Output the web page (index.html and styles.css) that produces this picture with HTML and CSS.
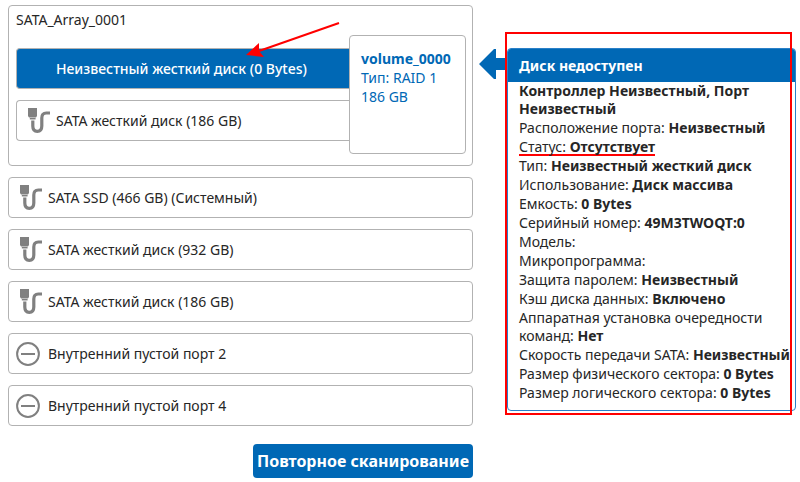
FILE: index.html
```
<!DOCTYPE html>
<html lang="ru">
<head>
<meta charset="utf-8">
<meta name="viewport" content="width=device-width, initial-scale=1">
<title>SATA_Array_0001</title>
<link rel="stylesheet" href="styles.css">
</head>
<body>

<svg class="defs" aria-hidden="true">
	<symbol id="cable" viewBox="0 0 24 26">
		<path d="M0 0h9v8l-1 1.500H1L0 8z" fill="#808080"/>
		<path d="M1.800 10.700h5.800" stroke="#808080" stroke-width="1.500"/>
		<path d="M4.800 12.500v5.500c0 3.400 1.600 5.300 4.500 5.300s4.500-1.900 4.500-5.300V10c0-3.500 1.500-5 4.500-5H22" fill="none" stroke="#808080" stroke-width="3.200"/>
	</symbol>
	<symbol id="empty" viewBox="0 0 24 24">
		<circle cx="12" cy="12" r="10.900" fill="none" stroke="#808080" stroke-width="2"/>
		<path d="M5 12h14" stroke="#808080" stroke-width="2"/>
	</symbol>
</svg>

<main class="page">
	<section class="devices">
		<div class="array">
			<h1 class="array-name">SATA_Array_0001</h1>
			<div class="array-body">
				<div class="members">
					<button type="button" class="disk selected"><span class="icon"></span>Неизвестный жесткий диск (0 Bytes)</button>
					<button type="button" class="disk"><svg class="icon"><use href="#cable"/></svg>SATA жесткий диск (186 GB)</button>
				</div>
				<button type="button" class="volume">
					<b>volume_0000</b>
					<span>Тип: RAID 1</span>
					<span>186 GB</span>
				</button>
			</div>
		</div>
		<button type="button" class="disk"><svg class="icon"><use href="#cable"/></svg>SATA SSD (466 GB) (Системный)</button>
		<button type="button" class="disk"><svg class="icon"><use href="#cable"/></svg>SATA жесткий диск (932 GB)</button>
		<button type="button" class="disk"><svg class="icon"><use href="#cable"/></svg>SATA жесткий диск (186 GB)</button>
		<button type="button" class="disk port"><svg class="icon"><use href="#empty"/></svg>Внутренний пустой порт 2</button>
		<button type="button" class="disk port"><svg class="icon"><use href="#empty"/></svg>Внутренний пустой порт 4</button>
		<button type="button" class="rescan">Повторное сканирование</button>

		<!-- red arrow pointing at the missing disk -->
		<svg class="mark-arrow" viewBox="0 0 96 38" aria-hidden="true">
			<path d="M94 1L14 29" stroke="#f00" stroke-width="2"/>
			<path d="M1 33L14 21v8l5 6z" fill="#f00"/>
		</svg>
	</section>

	<aside class="details">
		<svg class="pointer" viewBox="0 0 28 30" aria-hidden="true">
			<path d="M0 15L15 0h2v9h11v12H17v9h-2z" fill="#0068b5"/>
		</svg>
		<div class="panel">
			<h2 class="panel-title">Диск недоступен</h2>
			<ul class="props">
				<li><b>Контроллер Неизвестный, Порт Неизвестный</b></li>
				<li>Расположение порта: <b>Неизвестный</b></li>
				<li><span class="mark-line">Статус: <b>Отсутствует</b></span></li>
				<li>Тип: <b>Неизвестный жесткий диск</b></li>
				<li>Использование: <b>Диск массива</b></li>
				<li>Емкость: <b>0 Bytes</b></li>
				<li>Серийный номер: <b>49M3TWOQT:0</b></li>
				<li>Модель:</li>
				<li>Микропрограмма:</li>
				<li>Защита паролем: <b>Неизвестный</b></li>
				<li>Кэш диска данных: <b>Включено</b></li>
				<li>Аппаратная установка очередности команд: <b>Нет</b></li>
				<li>Скорость передачи SATA: <b>Неизвестный</b></li>
				<li>Размер физического сектора: <b>0 Bytes</b></li>
				<li>Размер логического сектора: <b>0 Bytes</b></li>
			</ul>
		</div>
		<div class="mark-box"></div>
	</aside>
</main>

</body>
</html>
```
FILE: styles.css
```
*
{
	box-sizing: border-box;
}
body
{
	margin: 0;
	background: #fff;
	color: #262626;
	font: 14px/18px "Noto Sans", sans-serif;
}
button
{
	font: inherit;
	color: inherit;
	text-align: left;
	cursor: pointer;
}
.defs
{
	position: absolute;
	width: 0;
	height: 0;
}
.page
{
	display: grid;
	grid-template-columns: 465fr 289fr;
	gap: 34px;
	align-items: start;
	padding: 5px 4px 4px 8px;
}
.devices
{
	position: relative;
	display: flex;
	flex-direction: column;
	gap: 11px;
}
.array
{
	border: 1px solid #b2b2b2;
	border-radius: 4px;
	padding: 5px 6px 11px 7px;
}
.array-name
{
	margin: 0 0 6px;
	font-size: 14px;
	font-weight: normal;
	line-height: 18px;
}
.array-body
{
	display: flex;
}
.members
{
	flex: 1;
	display: flex;
	flex-direction: column;
	gap: 11px;
	padding-top: 13px;
}
.disk
{
	display: flex;
	align-items: center;
	gap: 4px;
	min-height: 41px;
	padding: 0 11px;
	border: 1px solid #b2b2b2;
	border-radius: 4px;
	background: #fff;
}
.icon
{
	width: 24px;
	height: 26px;
	flex: none;
}
.port
{
	padding-left: 7px;
	gap: 8px;
}
.members .disk
{
	border-right: 0;
	border-radius: 4px 0 0 4px;
}
.members .selected
{
	background: #0068b5;
	color: #fff;
	font-weight: 500;
}
.volume
{
	display: flex;
	flex-direction: column;
	justify-content: flex-start;
	width: 117px;
	min-height: 119px;
	padding: 13px 11px;
	border: 1px solid #b2b2b2;
	border-radius: 4px;
	background: #fff;
	color: #0068b5;
	line-height: 19px;
}
.rescan
{
	align-self: flex-end;
	margin-top: 7px;
	padding: 5px 4px;
	border: 0;
	border-radius: 4px;
	background: #0068b5;
	color: #fff;
	font-size: 16px;
	font-weight: bold;
	line-height: 24px;
}
.details
{
	position: relative;
	padding-top: 43px;
}
.panel
{
	border: 1px solid #2a80c8;
	border-radius: 4px;
	overflow: hidden;
}
.panel-title
{
	margin: 0;
	padding: 8px 11px 7px;
	background: #0068b5;
	color: #fff;
	font-size: 14px;
	line-height: 18px;
}
.props
{
	display: flex;
	flex-direction: column;
	gap: 1px;
	margin: 0;
	padding: 0 0 8px 11px;
	list-style: none;
}
.pointer
{
	position: absolute;
	top: 44px;
	left: -28px;
	width: 28px;
	height: 30px;
}
.mark-arrow
{
	position: absolute;
	top: 17px;
	left: 237px;
	width: 96px;
	height: 38px;
}
.mark-box
{
	position: absolute;
	top: 27px;
	left: -2px;
	right: 4px;
	bottom: -4px;
	border: 2px solid #f00;
	pointer-events: none;
}
.mark-line
{
	background: linear-gradient(#f00, #f00) bottom / 100% 2px no-repeat;
}
```
